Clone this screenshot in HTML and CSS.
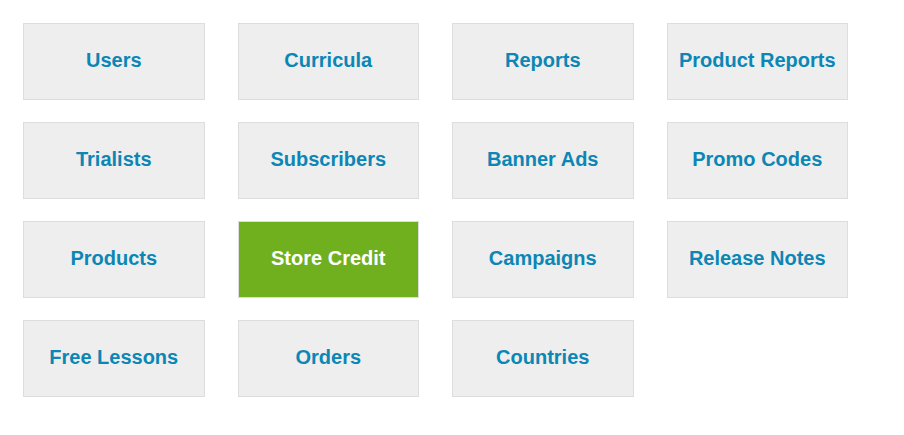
FILE: index.html
```html
<!DOCTYPE html>
<html lang="en">
<head>
    <meta charset="UTF-8">
    <meta name="viewport" content="width=device-width, initial-scale=1.0">
    <title>Admin</title>
    <link rel="stylesheet" href="styles.css">
</head>
<body>
    <div class="tiles">
        <a class="tile" href="#">Users</a>
        <a class="tile" href="#">Curricula</a>
        <a class="tile" href="#">Reports</a>
        <a class="tile" href="#">Product Reports</a>

        <a class="tile" href="#">Trialists</a>
        <a class="tile" href="#">Subscribers</a>
        <a class="tile" href="#">Banner Ads</a>
        <a class="tile" href="#">Promo Codes</a>

        <a class="tile" href="#">Products</a>
        <a class="tile active" href="#">Store Credit</a>
        <a class="tile" href="#">Campaigns</a>
        <a class="tile" href="#">Release Notes</a>

        <a class="tile" href="#">Free Lessons</a>
        <a class="tile" href="#">Orders</a>
        <a class="tile" href="#">Countries</a>
    </div>
</body>
</html>
```

FILE: styles.css
```css
body {
    font-family: "Liberation Sans", Arial, sans-serif;
    margin: 0;
    padding: 23px;
    background-color: #fff;
}

.tiles {
    display: grid;
    grid-template-columns: repeat(4, 181.5px);
    column-gap: 33px;
    row-gap: 22px;
}

.tile {
    box-sizing: border-box;
    height: 77px;
    padding-bottom: 2px;
    display: flex;
    justify-content: center;
    align-items: center;
    background-color: #eeeeee;
    border: 1px solid #dddddd;
    color: #0b86b5;
    font-size: 20px;
    font-weight: bold;
    text-decoration: none;
}

.tile.active {
    background-color: #70b01f;
    color: #fff;
}
```
